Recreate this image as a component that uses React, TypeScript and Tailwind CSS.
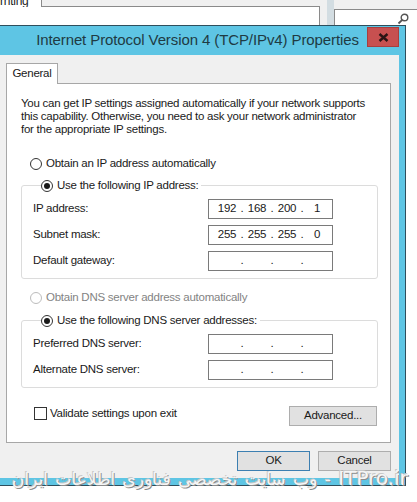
import { Fragment } from 'react';

const ui = "font-['Liberation_Sans',sans-serif]";

function Radio({ checked, disabled }: { checked?: boolean; disabled?: boolean }) {
  return (
    <span
      className={`flex h-[12px] w-[12px] shrink-0 items-center justify-center rounded-full border bg-white ${
        disabled ? 'border-[#bcbcbc]' : 'border-[#333333]'
      }`}
    >
      {checked && <span className="h-[6px] w-[6px] rounded-full bg-[#1a1a1a]" />}
    </span>
  );
}

function IpField({ parts }: { parts?: string[] }) {
  const cells = parts ?? ['', '', '', ''];
  return (
    <div className="flex h-[20px] w-[125px] shrink-0 items-center border border-[#7a7a7a] bg-white pl-[6px] text-[#1a1a1a]">
      {cells.map((p, i) => (
        <Fragment key={i}>
          <span className="w-[24px] text-center">{p}</span>
          {i < 3 && <span className="w-[6px] text-center">.</span>}
        </Fragment>
      ))}
    </div>
  );
}

function FieldRow({ label, parts }: { label: string; parts?: string[] }) {
  return (
    <div className="flex h-[20px] items-center">
      <span className="w-[175px] shrink-0">{label}</span>
      <IpField parts={parts} />
    </div>
  );
}

function Button({ label, primary, className = '' }: { label: string; primary?: boolean; className?: string }) {
  return (
    <div
      className={`flex h-[20px] shrink-0 items-center justify-center border bg-[#e1e1e1] text-[#1a1a1a] ${
        primary ? 'border-[#3c7fb1]' : 'border-[#adadad]'
      } ${className}`}
    >
      {label}
    </div>
  );
}

// strip of the windows sitting behind the dialog
function Backdrop() {
  return (
    <div className="flex h-[25px] bg-[#f0f0f0]">
      <div className="flex w-[327px] flex-col">
        <div className="flex h-[7px]">
          <div className="relative w-[41px] overflow-hidden bg-white">
            <span className="absolute -top-[8px] left-0 text-[12px] text-[#222]">rnting</span>
          </div>
          <div className="flex-1 border-b border-l border-[#8a8a8a] bg-[#f0f0f0]" />
          <div className="w-[7px]" />
        </div>
        <div className="flex flex-1">
          <div className="w-[320px] border-r border-[#8a8a8a] bg-white" />
        </div>
      </div>
      <div className="w-[7px] bg-[#d3dde2]" />
      <div className="flex flex-1 flex-col">
        <div className="h-[9px]" />
        <div className="flex flex-1 justify-end border-t border-l border-[#8a8a8a] bg-white pr-[8px] pt-[3px]">
          <svg width="12" height="12" viewBox="0 0 12 12">
            <circle cx="7.5" cy="4.5" r="3.3" fill="none" stroke="#555" strokeWidth="1.4" />
            <path d="M5.2 6.8 L1.5 10.5" stroke="#555" strokeWidth="1.8" />
          </svg>
        </div>
      </div>
    </div>
  );
}

export default function App() {
  return (
    <div className={`relative h-[502px] w-[417px] overflow-hidden bg-white text-[11.5px] tracking-[-0.25px] text-[#1a1a1a] ${ui}`}>
      <Backdrop />

      <div className="flex w-[406px] flex-col border-t border-r border-b border-[#2e4e5c]">
        {/* title bar */}
        <div className="relative flex h-[29px] items-center justify-center bg-[#5ec5e4]">
          <span className="pr-[10px] text-[15px] tracking-[-0.1px] whitespace-nowrap text-[#1f3b43]">
            Internet Protocol Version 4 (TCP/IPv4) Properties
          </span>
          <div className="absolute top-[1px] right-[6px] flex h-[20px] w-[32px] items-center justify-center border border-[#a83e3e] bg-[#c75050]">
            <svg width="11" height="9" viewBox="0 0 11 9">
              <path d="M1.5 1 L9.5 8 M9.5 1 L1.5 8" stroke="#2a1414" strokeWidth="2.4" />
            </svg>
          </div>
        </div>

        <div className="flex">
          <div className="flex h-[423px] flex-1 flex-col bg-[#f0f0f0] pt-[8px] pl-[6px] pr-[8px]">
            {/* tab header */}
            <div className="relative z-10 -mb-px flex">
              <div className="flex h-[21px] w-[52px] items-center justify-center border border-b-0 border-[#a7a7a7] bg-white">
                General
              </div>
            </div>

            {/* tab page */}
            <div className="flex h-[360px] flex-col border border-[#a7a7a7] bg-white pt-[13px]">
              <p className="pl-[14px] leading-[13px] whitespace-nowrap">
                You can get IP settings assigned automatically if your network supports
                <br />
                this capability. Otherwise, you need to ask your network administrator
                <br />
                for the appropriate IP settings.
              </p>

              <div className="mt-[21px] ml-[23px] flex h-[13px] items-center gap-[4px]">
                <Radio />
                <span>Obtain an IP address automatically</span>
              </div>

              <fieldset className="mt-[9px] ml-[14px] w-[357px] rounded-[3px] border border-[#dcdcdc] pt-[7px] pb-[7px] pl-[11px]">
                <legend className="ml-[8px] flex h-[13px] items-center gap-[4px] pr-[3px]">
                  <Radio checked />
                  <span>Use the following IP address:</span>
                </legend>
                <div className="flex flex-col gap-[6px]">
                  <FieldRow label="IP address:" parts={['192', '168', '200', '1']} />
                  <FieldRow label="Subnet mask:" parts={['255', '255', '255', '0']} />
                  <FieldRow label="Default gateway:" />
                </div>
              </fieldset>

              <div className="mt-[12px] ml-[23px] flex h-[13px] items-center gap-[4px] text-[#838383]">
                <Radio disabled />
                <span>Obtain DNS server address automatically</span>
              </div>

              <fieldset className="mt-[10px] ml-[14px] w-[357px] rounded-[3px] border border-[#dcdcdc] pt-[7px] pb-[7px] pl-[11px]">
                <legend className="ml-[8px] flex h-[13px] items-center gap-[4px] pr-[3px]">
                  <Radio checked />
                  <span>Use the following DNS server addresses:</span>
                </legend>
                <div className="flex flex-col gap-[6px]">
                  <FieldRow label="Preferred DNS server:" />
                  <FieldRow label="Alternate DNS server:" />
                </div>
              </fieldset>

              <div className="mt-[17px] flex items-start pl-[27px] pr-[13px]">
                <div className="flex items-center gap-[3px]">
                  <span className="h-[13px] w-[13px] border border-[#333333] bg-white" />
                  <span>Validate settings upon exit</span>
                </div>
                <Button label="Advanced..." className="mt-[1px] ml-auto w-[88px]" />
              </div>
            </div>

            <div className="mt-[8px] flex justify-end gap-[8px]">
              <Button label="OK" primary className="w-[73px]" />
              <Button label="Cancel" className="w-[73px]" />
            </div>
          </div>
          <div className="w-[6px] bg-[#5ec5e4]" />
        </div>
        <div className="h-[7px] bg-[#5ec5e4]" />
      </div>

      {/* site watermark */}
      <div
        dir="rtl"
        className="absolute top-[463px] right-[9px] flex items-baseline font-['DejaVu_Sans',sans-serif] text-[17px] tracking-normal [word-spacing:2px] whitespace-nowrap text-[#f6f6f6] [text-shadow:1px_1px_0_#8c8c8c,-1px_-1px_0_#c8c8c8]"
      >
        <span className="text-[20px]">ITPro.ir</span>
        <span>&nbsp;- وب سایت تخصصی فناوری اطلاعات ایران</span>
      </div>
    </div>
  );
}
